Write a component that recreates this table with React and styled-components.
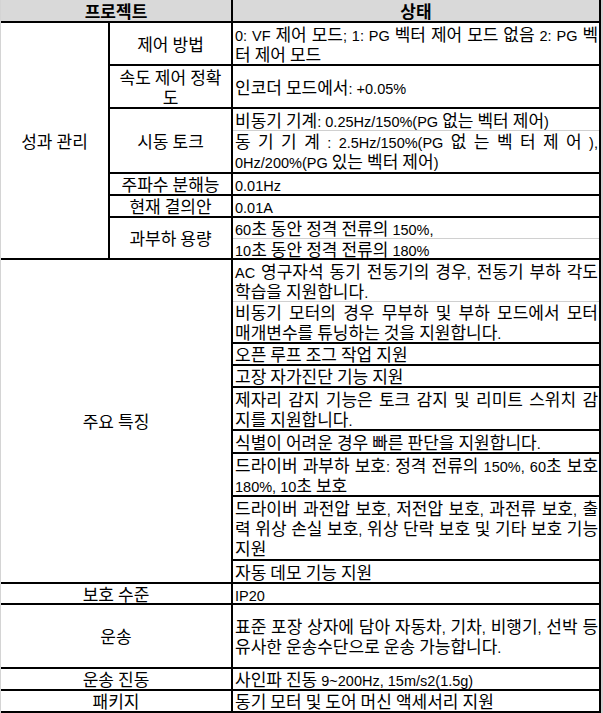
import React from 'react';
import styled, { createGlobalStyle } from 'styled-components';

const GlobalStyle = createGlobalStyle`
  html, body { margin: 0; padding: 0; background: #fff; }
  body {
    font-family: "Noto Sans CJK KR", "Liberation Sans", sans-serif;
    font-size: 17px;
    color: #000;
  }
`;

const Frame = styled.div`
  width: 603px;
  box-sizing: border-box;
  border-left: 1px solid #d4d4d4;
  border-right: 2px solid #d4d4d4;
`;

const Sheet = styled.div`
  display: grid;
  grid-template-columns: 107px 121px 366px;
  grid-template-rows: 21px 41px 41px 63px 20px 20px 40px 82px 20px 20px 41px 21px 41px 62px 21px 19px 62px 20px 20px;
  gap: 2px;
  background: #000;
  border-right: 2px solid #000;
  border-bottom: 2px solid #000;
`;

const HeadCell = styled.div`
  grid-column: span ${(p) => p.$cols || 1};
  background: #d9d9d9;
  font-weight: 700;
  display: flex;
  align-items: center;
  justify-content: center;
  line-height: 20px;
`;

const LabelCell = styled.div`
  grid-column: span ${(p) => p.$cols || 1};
  grid-row: span ${(p) => p.$rows || 1};
  background: #fff;
  display: flex;
  flex-direction: column;
  align-items: center;
  justify-content: center;
  text-align: center;
  line-height: 20px;
`;

const LabelLine = styled.div`
  height: 20px;
  white-space: nowrap;
`;

const ValueCell = styled.div`
  background: #fff;
  display: flex;
  flex-direction: column;
  justify-content: center;
  padding: 0 1px 0 2px;
  line-height: 20px;
`;

const Part = styled.div`
  border-top: ${(p) => (p.$divided ? '1px solid #d0d0d0' : 'none')};
  margin: 0 -1px 0 -2px;
  padding: 0 1px 0 2px;
`;

const Line = styled.div`
  height: 20px;
  white-space: ${(p) => (p.$justify ? 'normal' : 'nowrap')};
  text-align: ${(p) => (p.$justify ? 'justify' : 'left')};
  text-align-last: ${(p) => (p.$justify ? 'justify' : 'auto')};
`;

const SpreadLine = styled.div`
  height: 20px;
  display: flex;
  justify-content: space-between;
  white-space: nowrap;
`;

const Latin = styled.span`
  font-family: "Liberation Sans", Arial, sans-serif;
  font-size: 14.5px;
`;

const HANGUL = /([\u1100-\u11FF\u3130-\u318F\uAC00-\uD7AF]+)/;

function Txt({ children }) {
  return children.split(HANGUL).map((seg, i) => {
    if (!seg) return null;
    if (HANGUL.test(seg)) return <React.Fragment key={i}>{seg}</React.Fragment>;
    return <Latin key={i}>{seg}</Latin>;
  });
}

const J = (text) => ({ text, justify: true });

const perf = [
  { label: ['제어 방법'], parts: [[J('0: VF 제어 모드; 1: PG 벡터 제어 모드 없음 2: PG 벡'), '터 제어 모드']] },
  { label: ['속도 제어 정확', '도'], parts: [['인코더 모드에서: +0.05%']] },
  {
    label: ['시동 토크'],
    parts: [
      ['비동기 기계: 0.25Hz/150%(PG 없는 벡터 제어)'],
      [{ spread: ['동', '기', '기', '계', ':', '2.5Hz/150%(PG', '없', '는', '벡', '터', '제', '어', '),'] }, '0Hz/200%(PG 있는 벡터 제어)'],
    ],
  },
  { label: ['주파수 분해능'], parts: [['0.01Hz']] },
  { label: ['현재 결의안'], parts: [['0.01A']] },
  { label: ['과부하 용량'], parts: [['60초 동안 정격 전류의 150%,'], ['10초 동안 정격 전류의 180%']] },
];

const features = [
  [
    [J('AC 영구자석 동기 전동기의 경우, 전동기 부하 각도'), '학습을 지원합니다.'],
    [J('비동기 모터의 경우 무부하 및 부하 모드에서 모터'), '매개변수를 튜닝하는 것을 지원합니다.'],
  ],
  [['오픈 루프 조그 작업 지원']],
  [['고장 자가진단 기능 지원']],
  [[J('제자리 감지 기능은 토크 감지 및 리미트 스위치 감'), '지를 지원합니다.']],
  [['식별이 어려운 경우 빠른 판단을 지원합니다.']],
  [[J('드라이버 과부하 보호: 정격 전류의 150%, 60초 보호'), '180%, 10초 보호']],
  [[J('드라이버 과전압 보호, 저전압 보호, 과전류 보호, 출'), J('력 위상 손실 보호, 위상 단락 보호 및 기타 보호 기능'), '지원']],
  [['자동 데모 기능 지원']],
];

const misc = [
  { label: '보호 수준', parts: [['IP20']] },
  { label: '운송', parts: [[J('표준 포장 상자에 담아 자동차, 기차, 비행기, 선박 등'), '유사한 운송수단으로 운송 가능합니다.']] },
  { label: '운송 진동', parts: [['사인파 진동 9~200Hz, 15m/s2(1.5g)']] },
  { label: '패키지', parts: [['동기 모터 및 도어 머신 액세서리 지원']] },
];

function renderLine(item, i) {
  if (typeof item === 'string') {
    return (
      <Line key={i}>
        <Txt>{item}</Txt>
      </Line>
    );
  }
  if (item.spread) {
    return (
      <SpreadLine key={i}>
        {item.spread.map((t, k) => (
          <span key={k}>
            <Txt>{t}</Txt>
          </span>
        ))}
      </SpreadLine>
    );
  }
  return (
    <Line key={i} $justify>
      <Txt>{item.text}</Txt>
    </Line>
  );
}

function Value({ parts }) {
  return (
    <ValueCell>
      {parts.map((lines, i) => (
        <Part key={i} $divided={i > 0}>
          {lines.map(renderLine)}
        </Part>
      ))}
    </ValueCell>
  );
}

function Label({ lines, cols, rows }) {
  return (
    <LabelCell $cols={cols} $rows={rows}>
      {lines.map((l, k) => (
        <LabelLine key={k}>
          <Txt>{l}</Txt>
        </LabelLine>
      ))}
    </LabelCell>
  );
}

export default function App() {
  return (
    <>
      <GlobalStyle />
      <Frame>
        <Sheet>
          <HeadCell $cols={2}>프로젝트</HeadCell>
          <HeadCell>상태</HeadCell>

          <Label lines={['성과 관리']} rows={perf.length} />
          {perf.map((row, i) => (
            <React.Fragment key={i}>
              <Label lines={row.label} />
              <Value parts={row.parts} />
            </React.Fragment>
          ))}

          <Label lines={['주요 특징']} cols={2} rows={features.length} />
          {features.map((parts, i) => (
            <Value key={i} parts={parts} />
          ))}

          {misc.map((row, i) => (
            <React.Fragment key={i}>
              <Label lines={[row.label]} cols={2} />
              <Value parts={row.parts} />
            </React.Fragment>
          ))}
        </Sheet>
      </Frame>
    </>
  );
}
